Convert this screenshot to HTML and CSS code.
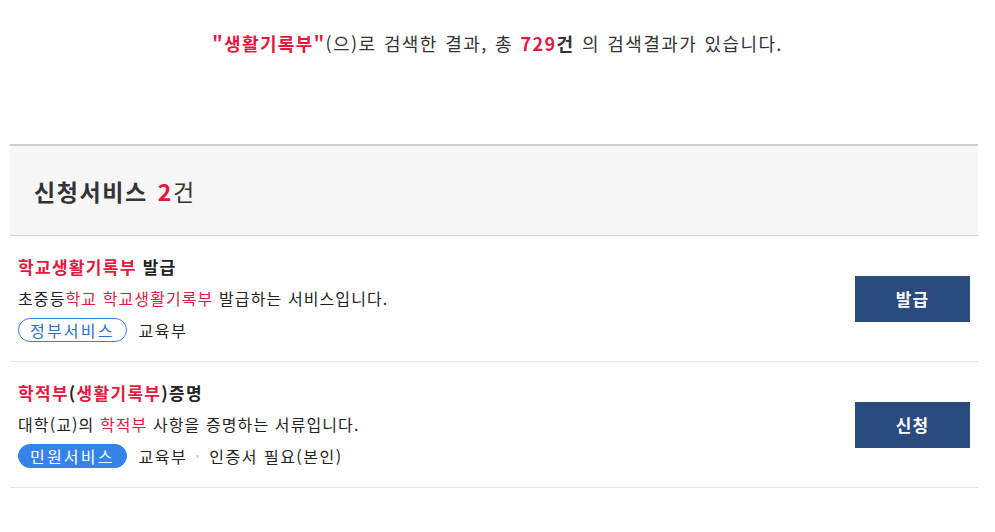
FILE: index.html
```html
<!DOCTYPE html>
<html lang="ko">
<head>
  <meta charset="UTF-8">
  <meta name="viewport" content="width=device-width, initial-scale=1.0">
  <title>검색결과</title>
  <link rel="stylesheet" href="styles.css">
</head>
<body>
  <p class="summary">
    <strong class="hl">"생활기록부"</strong>(으)로 검색한 결과, 총 <strong><span class="hl">729</span>건</strong> 의 검색결과가 있습니다.
  </p>

  <div class="result-section">
    <div class="section-head">
      <h2>신청서비스 <span class="hl">2</span><span class="unit">건</span></h2>
    </div>

    <div class="result-item">
      <div class="item-body">
        <div class="item-title"><span class="hl">학교생활기록부</span> 발급</div>
        <div class="item-desc">초중등<span class="hl">학교</span> <span class="hl">학교생활기록부</span> 발급하는 서비스입니다.</div>
        <div class="item-meta">
          <span class="tag tag-line">정부서비스</span>
          <span class="org">교육부</span>
        </div>
      </div>
      <button class="action-btn">발급</button>
    </div>

    <div class="result-item">
      <div class="item-body">
        <div class="item-title"><span class="hl">학적부</span>(<span class="hl">생활기록부</span>)증명</div>
        <div class="item-desc">대학(교)의 <span class="hl">학적부</span> 사항을 증명하는 서류입니다.</div>
        <div class="item-meta">
          <span class="tag tag-fill">민원서비스</span>
          <span class="org">교육부</span>
          <span class="dot"></span>
          <span class="org">인증서 필요(본인)</span>
        </div>
      </div>
      <button class="action-btn">신청</button>
    </div>
  </div>
</body>
</html>
```

FILE: styles.css
```css
body {
  margin: 0;
  font-family: "Noto Sans CJK KR", "Noto Sans", sans-serif;
  color: #222;
  background: #fff;
}

.hl {
  color: #e5173f;
}

.summary {
  margin: 0;
  padding-top: 30px;
  height: 113px;
  box-sizing: border-box;
  text-align: center;
  font-size: 18px;
  line-height: 26px;
  letter-spacing: 1.4px;
  word-spacing: 1px;
  color: #333;
}

.summary strong {
  font-weight: 700;
}

.result-section {
  width: 968px;
  margin-left: 10px;
  margin-top: 31px;
  border-top: 2px solid #cdcdcd;
}

.section-head {
  background: #f6f6f6;
  height: 89px;
  border-bottom: 1px solid #d2d2d2;
  display: flex;
  align-items: center;
  padding-left: 24px;
}

.section-head h2 {
  margin: 0;
  font-size: 23px;
  font-weight: 700;
  color: #333;
  letter-spacing: 1.6px;
  word-spacing: 2px;
}

.section-head .unit {
  font-weight: 400;
}

.result-item {
  display: flex;
  align-items: center;
  justify-content: space-between;
  padding: 19px 8px 19px 8px;
  border-bottom: 1px solid #e5e5e5;
}

.item-title {
  font-size: 17px;
  font-weight: 700;
  line-height: 24px;
  letter-spacing: 1.3px;
  color: #222;
}

.item-desc {
  margin-top: 7px;
  font-size: 16px;
  line-height: 24px;
  letter-spacing: 1.1px;
  color: #222;
}

.item-meta {
  margin-top: 8px;
  display: flex;
  align-items: center;
  gap: 12px;
  font-size: 16px;
  line-height: 24px;
  letter-spacing: 1.5px;
}

.tag {
  display: inline-block;
  height: 24px;
  box-sizing: border-box;
  padding: 0 11px;
  border-radius: 12px;
  font-size: 16px;
  line-height: 22px;
  letter-spacing: 2.2px;
}

.tag-line {
  border: 1px solid #3a7fdc;
  color: #2a6fd0;
  background: #fff;
}

.tag-fill {
  border: 1px solid #3683e8;
  background: #3683e8;
  color: #fff;
}

.org {
  color: #222;
}

.dot {
  width: 3px;
  height: 3px;
  background: #ddd;
  margin: 0 -2px 0 -3px;
}

.action-btn {
  width: 115px;
  height: 46px;
  border: none;
  background: #2b4b7e;
  color: #fff;
  font-family: inherit;
  font-size: 17px;
  font-weight: 700;
  letter-spacing: 1px;
  cursor: pointer;
}
```
